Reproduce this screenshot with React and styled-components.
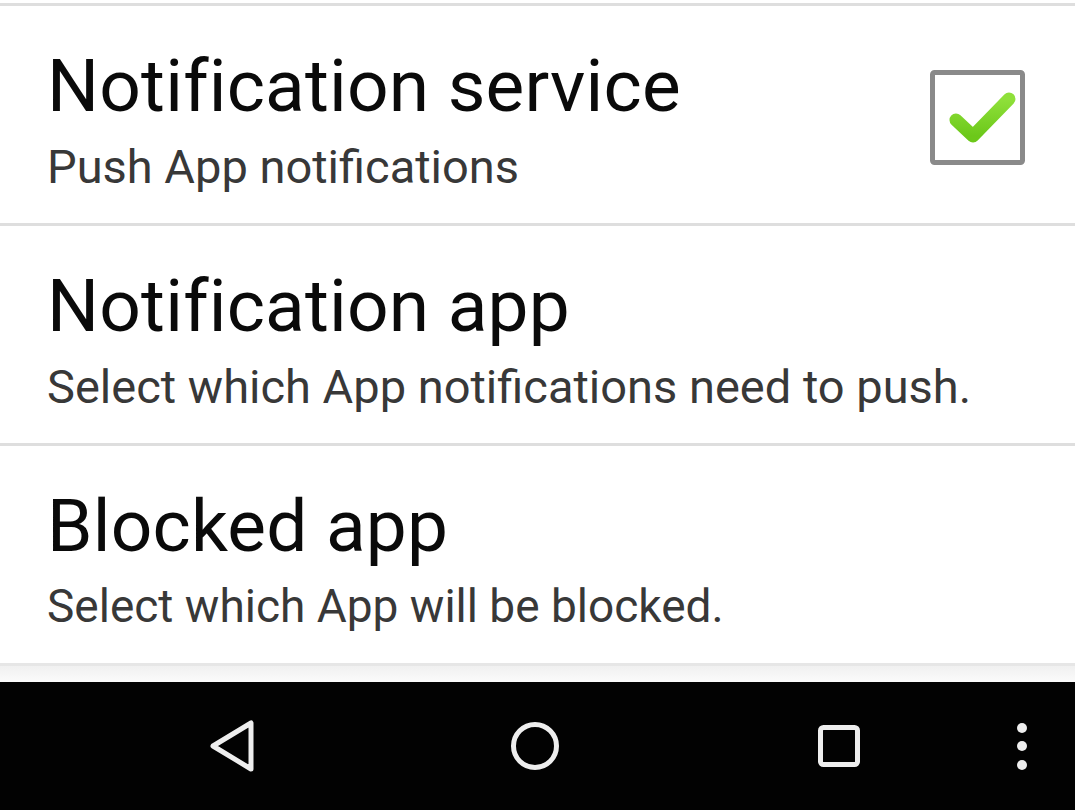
import styled, { createGlobalStyle } from 'styled-components'

const Global = createGlobalStyle`
  html, body {
    margin: 0;
    padding: 0;
    background: #fff;
  }
  body {
    font-family: Roboto, "Noto Sans", sans-serif;
  }
`

const Screen = styled.div`
  width: 1075px;
  height: 810px;
  display: flex;
  flex-direction: column;
  overflow: hidden;
  background: #fff;
`

const List = styled.div`
  display: flex;
  flex-direction: column;
  padding-top: 3px;
`

const Row = styled.div`
  height: 220px;
  box-sizing: border-box;
  border-top: 3px solid #dedede;
  display: flex;
  align-items: center;
  padding: 0 47px 0 47px;
  &:last-of-type {
    border-bottom: 3px solid #e6e6e6;
    height: 223px;
  }
`

const Texts = styled.div`
  flex: 1;
  display: flex;
  flex-direction: column;
  padding-top: 10px;
`

const Title = styled.div`
  font-size: 73px;
  line-height: 73px;
  color: #0a0a0a;
  letter-spacing: 0.2px;
`

const Summary = styled.div`
  font-size: ${p => p.$size || 47}px;
  line-height: 47px;
  margin-top: 20px;
  color: #383838;
`

const Fade = styled.div`
  height: 16px;
  background: linear-gradient(#f0f0f0, #fbfbfb);
`

const NavBar = styled.div`
  flex: 1;
  background: #020202;
  display: flex;
  align-items: center;
  padding-left: 79px;
`

const NavSlot = styled.div`
  width: ${p => p.$w}px;
  display: flex;
  justify-content: center;
  align-items: center;
`

const CheckBox = () => (
  <svg width="100" height="100" viewBox="0 0 100 100" style={{ marginTop: 6 }}>
    <defs>
      <linearGradient id="g" x1="0" y1="0" x2="0" y2="1">
        <stop offset="0" stopColor="#8fe03a" />
        <stop offset="1" stopColor="#6cc81a" />
      </linearGradient>
    </defs>
    <rect x="4.5" y="4.5" width="90" height="90" rx="2" fill="#fff" stroke="#8a8a8a" strokeWidth="5" />
    <path d="M28 52 L45 68 L81 31" fill="none" stroke="url(#g)" strokeWidth="13" strokeLinecap="round" strokeLinejoin="round" />
  </svg>
)

const items = [
  { title: 'Notification service', summary: 'Push App notifications', check: true },
  { title: 'Notification app', summary: 'Select which App notifications need to push.' },
  { title: 'Blocked app', summary: 'Select which App will be blocked.', size: 46 },
]

export default function App() {
  return (
    <Screen>
      <Global />
      <List>
        {items.map(it => (
          <Row key={it.title}>
            <Texts>
              <Title>{it.title}</Title>
              <Summary $size={it.size}>{it.summary}</Summary>
            </Texts>
            {it.check && <CheckBox />}
          </Row>
        ))}
      </List>
      <Fade />
      <NavBar>
        <NavSlot $w={304}>
          <svg width="56" height="60" viewBox="0 0 56 60">
            <path d="M10 30 L48 7 L48 53 Z" fill="none" stroke="#eee" strokeWidth="5" strokeLinejoin="round" />
          </svg>
        </NavSlot>
        <NavSlot $w={304}>
          <svg width="60" height="60" viewBox="0 0 60 60">
            <circle cx="30" cy="30" r="21.5" fill="none" stroke="#eee" strokeWidth="5" />
          </svg>
        </NavSlot>
        <NavSlot $w={304}>
          <svg width="60" height="60" viewBox="0 0 60 60">
            <rect x="11.5" y="11.5" width="37" height="37" rx="3" fill="none" stroke="#eee" strokeWidth="5" />
          </svg>
        </NavSlot>
        <NavSlot $w={62}>
          <svg width="20" height="60" viewBox="0 0 20 60">
            <circle cx="10" cy="12" r="5" fill="#eee" />
            <circle cx="10" cy="30" r="5" fill="#eee" />
            <circle cx="10" cy="49" r="5" fill="#eee" />
          </svg>
        </NavSlot>
      </NavBar>
    </Screen>
  )
}
